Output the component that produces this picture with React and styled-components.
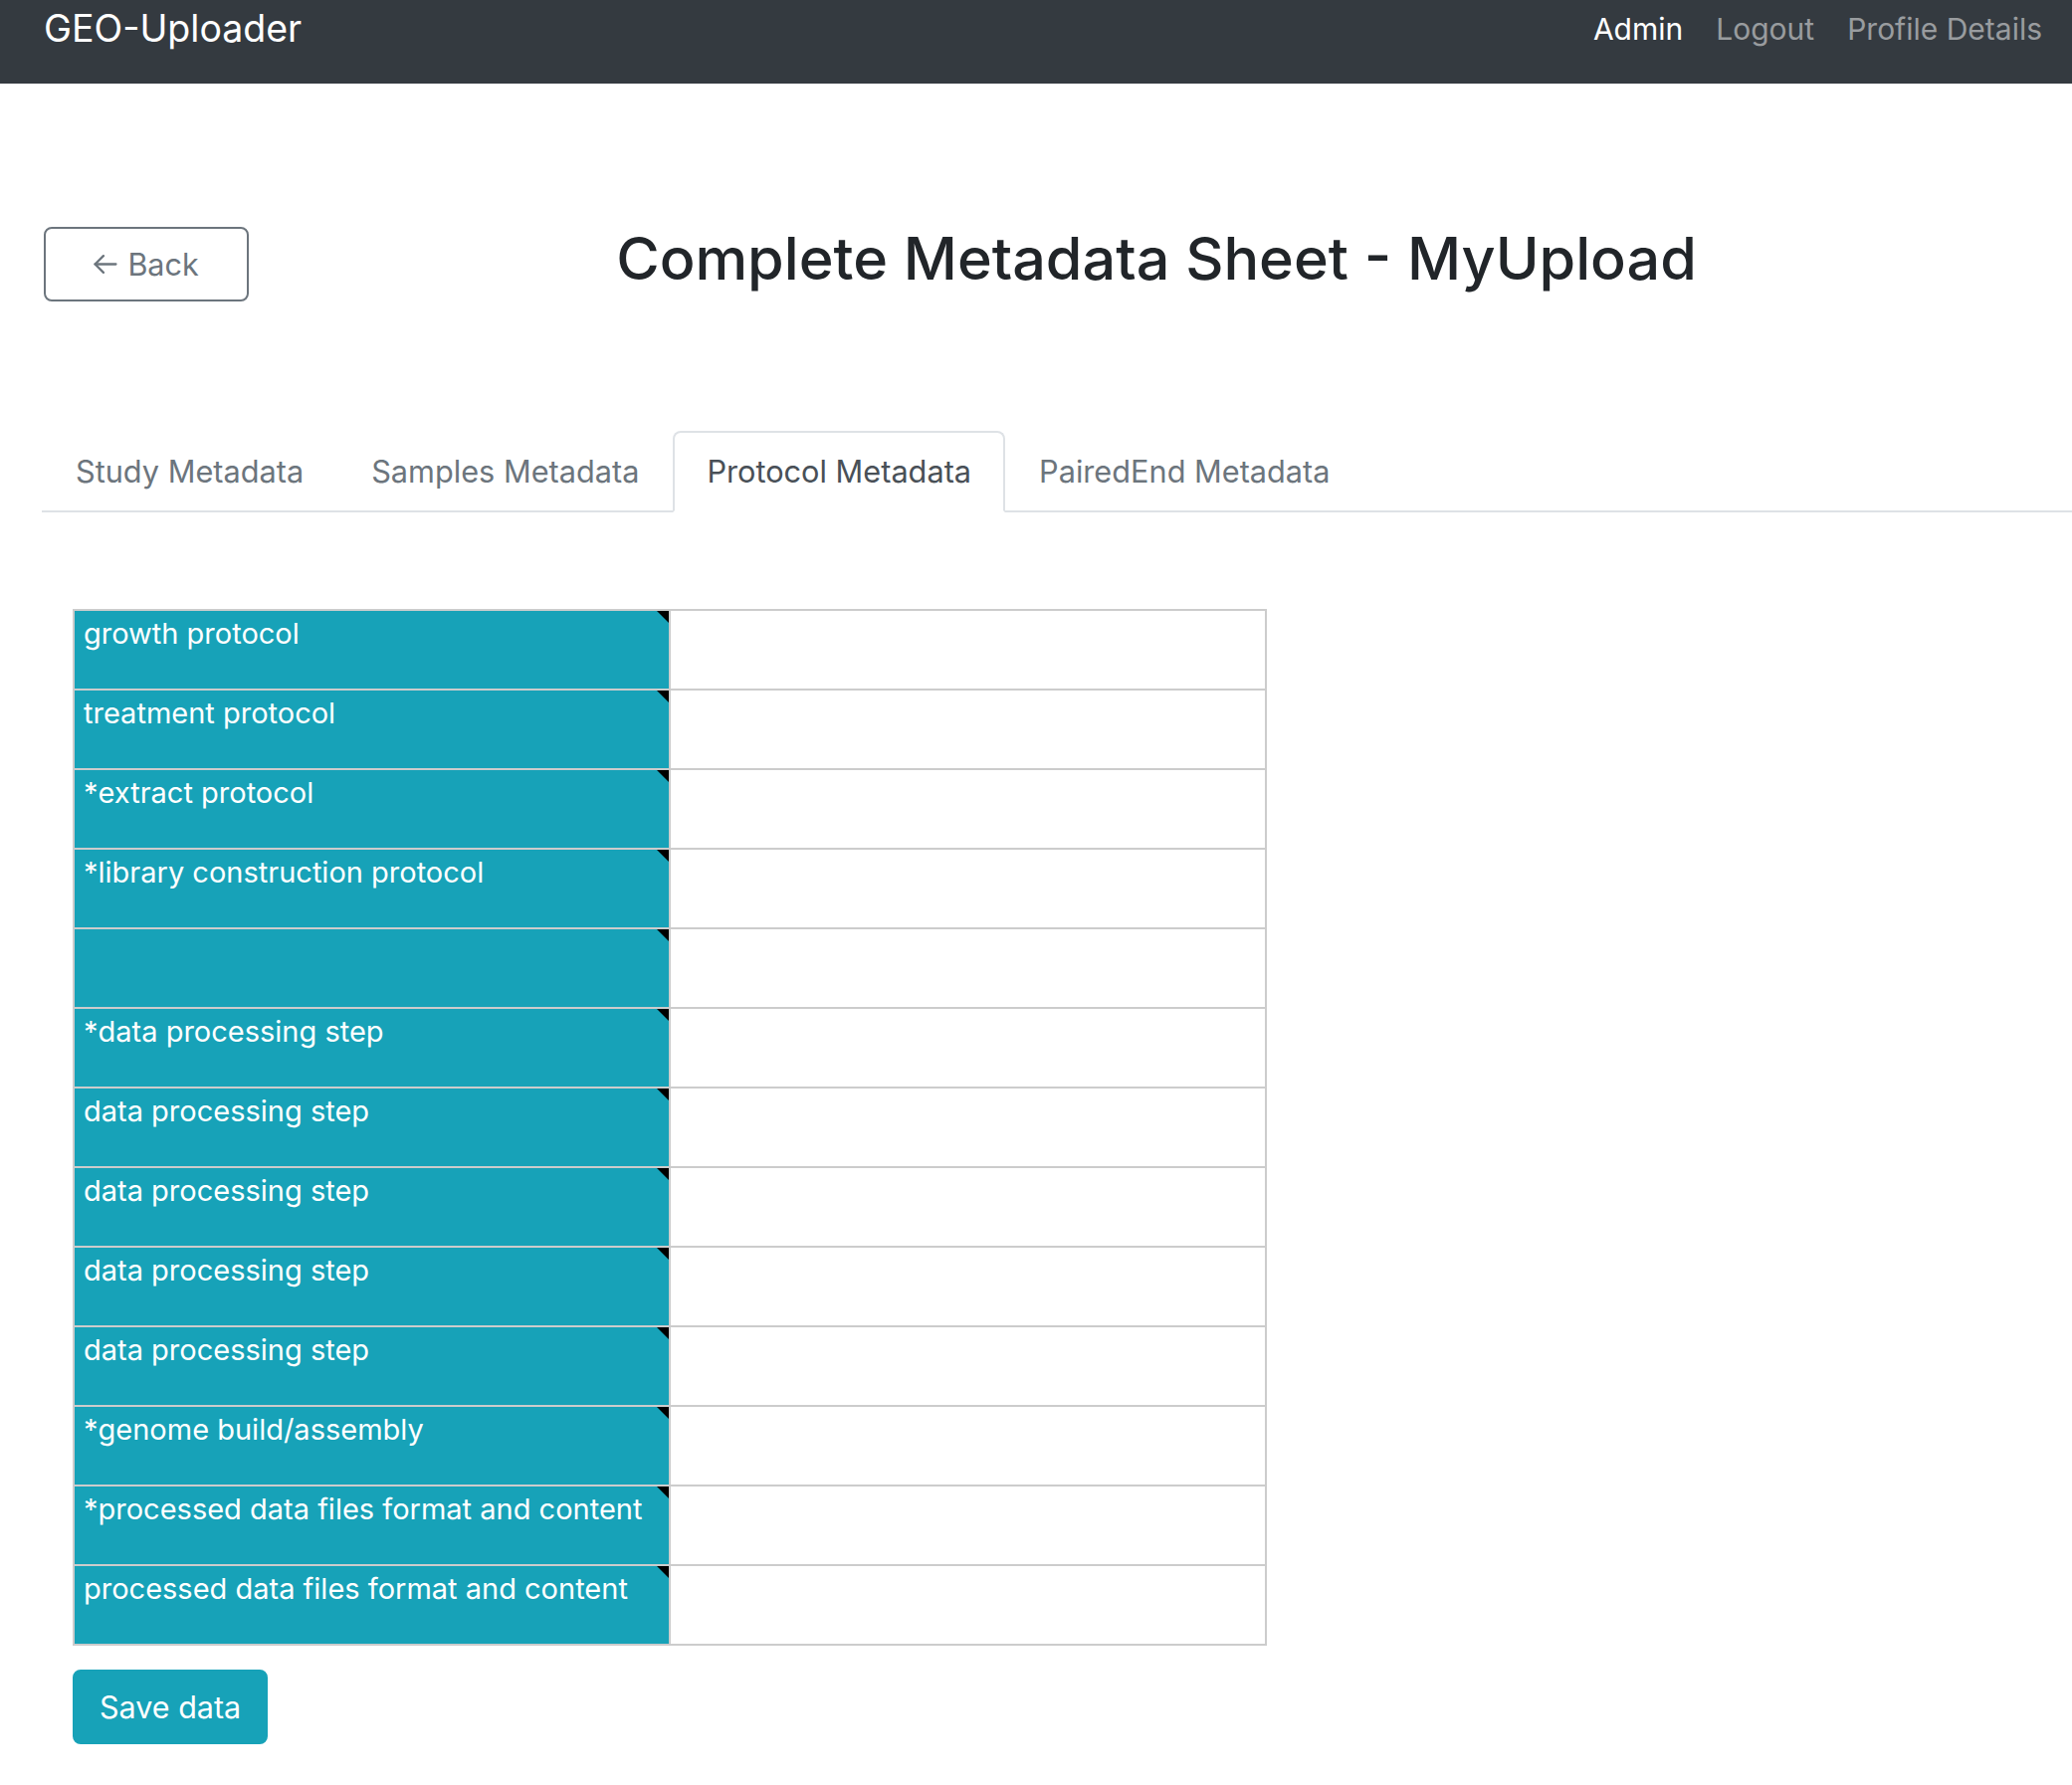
import React, {useState} from 'react'
import styled, {createGlobalStyle} from "styled-components"

const rows = [
  "growth protocol",
  "treatment protocol",
  "*extract protocol",
  "*library construction protocol",
  "",
  "*data processing step",
  "data processing step",
  "data processing step",
  "data processing step",
  "data processing step",
  "*genome build/assembly",
  "*processed data files format and content",
  "processed data files format and content",
]

const tabs = ["Study Metadata", "Samples Metadata", "Protocol Metadata", "PairedEnd Metadata"]

const ArrowLeft = () => (
  <svg width="24" height="21" viewBox="0 0 23 20" fill="none"
    stroke="currentColor" strokeWidth="2.2" strokeLinecap="round" strokeLinejoin="round">
    <polyline points="9.5,2 1.5,10 9.5,18" />
    <line x1="1.5" y1="10" x2="21.5" y2="10" />
  </svg>
)

const App = () => {
  const [active, setActive] = useState(2)
  const [values, setValues] = useState(rows.map(() => ""))

  const handleChange = (i) => (event) => {
    const next = [...values]
    next[i] = event.target.value
    setValues(next)
  }

  return (
    <>
      <GlobalStyle />
      <Navbar>
        <Brand>GEO-Uploader</Brand>
        <NavLinks>
          <NavLink $active>Admin</NavLink>
          <NavLink>Logout</NavLink>
          <NavLink>Profile Details</NavLink>
        </NavLinks>
      </Navbar>
      <Main>
        <Header>
          <BackButton>
            <ArrowLeft />
            Back
          </BackButton>
          <Title>Complete Metadata Sheet - MyUpload</Title>
        </Header>
        <TabBar>
          {tabs.map((t, i) => (
            <Tab key={t} $active={i === active} onClick={() => setActive(i)}>{t}</Tab>
          ))}
        </TabBar>
        <Content>
          <Sheet>
            {rows.map((label, i) => (
              <React.Fragment key={i}>
                <LabelCell>
                  {label}
                  <Marker />
                </LabelCell>
                <ValueCell value={values[i]} onChange={handleChange(i)} />
              </React.Fragment>
            ))}
          </Sheet>
          <SaveButton>Save data</SaveButton>
        </Content>
      </Main>
    </>
  )
}

export default App

const GlobalStyle = createGlobalStyle`
  body {
    margin: 0;
    background: #fff;
    font-family: Inter, "Liberation Sans", sans-serif;
    color: #212529;
  }
  * { box-sizing: border-box; }
`

const Navbar = styled.nav`
  height: 84px;
  background: #343a40;
  display: flex;
  justify-content: space-between;
  align-items: flex-start;
  padding: 5px 30px 0 44px;
`

const Brand = styled.div`
  color: #fff;
  font-size: 37.5px;
  line-height: 48px;
`

const NavLinks = styled.div`
  display: flex;
  gap: 33px;
`

const NavLink = styled.a`
  color: ${p => p.$active ? "#fff" : "rgba(255,255,255,0.5)"};
  font-size: 30px;
  line-height: 48px;
  cursor: pointer;
`

const Main = styled.main`
  padding: 144px 44px 60px 42px;
`

const Header = styled.div`
  display: grid;
  grid-template-columns: 242px 1fr;
  align-items: start;
  padding-left: 2px;
`

const BackButton = styled.button`
  width: 206px;
  height: 75px;
  display: flex;
  align-items: center;
  justify-content: center;
  gap: 10px;
  background: #fff;
  border: 2px solid #6c757d;
  border-radius: 8px;
  color: #6c757d;
  font-family: inherit;
  font-size: 30.5px;
  cursor: pointer;
`

const Title = styled.h2`
  margin: 0;
  text-align: center;
  font-size: 59.3px;
  line-height: 64px;
  font-weight: 500;
  color: #212529;
`

const TabBar = styled.div`
  display: flex;
  margin: 130px -44px 0 0;
  border-bottom: 2px solid #dee2e6;
`

const Tab = styled.div`
  padding: 15px 32px;
  line-height: 48px;
  font-size: 30.7px;
  border: 2px solid ${p => p.$active ? "#dee2e6" : "transparent"};
  border-bottom-color: ${p => p.$active ? "#fff" : "transparent"};
  border-radius: 8px 8px 0 0;
  margin-bottom: -2px;
  background: ${p => p.$active ? "#fff" : "transparent"};
  color: ${p => p.$active ? "#495057" : "#6c757d"};
  cursor: pointer;
`

const Content = styled.div`
  padding: 97px 0 0 31px;
`

const Sheet = styled.div`
  display: grid;
  grid-template-columns: 599px 599px;
  grid-auto-rows: 80px;
  width: fit-content;
  border-top: 2px solid #ccc;
  border-left: 2px solid #ccc;
`

const LabelCell = styled.div`
  position: relative;
  background: #17a2b8;
  color: #fff;
  font-size: 29px;
  line-height: 45px;
  padding: 0 9px;
  border-right: 2px solid #ccc;
  border-bottom: 2px solid #ccc;
  white-space: nowrap;
  overflow: hidden;
`

const Marker = styled.span`
  position: absolute;
  top: 0;
  right: 0;
  border-left: 12px solid transparent;
  border-top: 12px solid #000;
`

const ValueCell = styled.input`
  border: none;
  border-right: 2px solid #ccc;
  border-bottom: 2px solid #ccc;
  background: #fff;
  font-family: inherit;
  font-size: 29px;
  padding: 0 9px;
  outline: none;
`

const SaveButton = styled.button`
  margin-top: 24px;
  height: 75px;
  padding: 0 25px;
  background: #17a2b8;
  color: #fff;
  border: 2px solid #17a2b8;
  border-radius: 8px;
  font-family: inherit;
  font-size: 30.5px;
  cursor: pointer;
`
